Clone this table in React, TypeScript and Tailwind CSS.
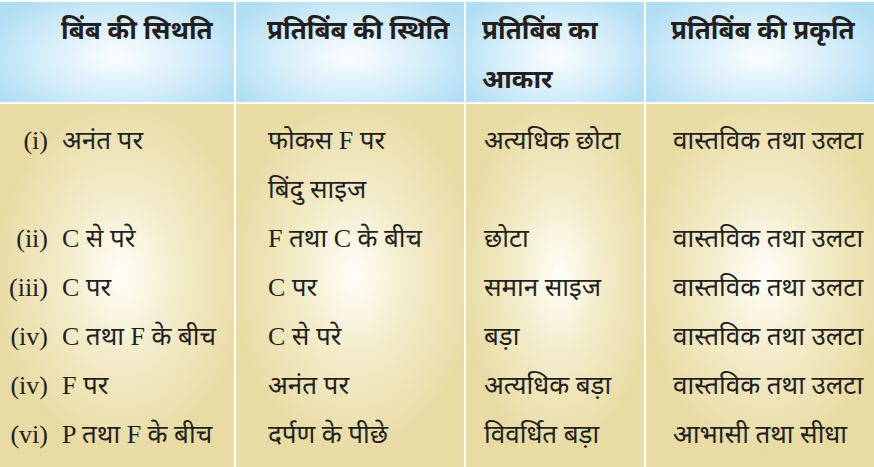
import React from "react";

const headBg =
  "bg-[radial-gradient(ellipse_60%_70%_at_50%_55%,#fbfdfe_0%,#dcf0fa_45%,#b1def4_100%)]";
const bodyBg =
  "bg-[radial-gradient(ellipse_55%_50%_at_52%_47%,#fffef8_0%,#f3ecca_45%,#e8dba3_100%)]";

const col1: [string, string][] = [
  ["(i)", "अनंत पर"],
  ["", ""],
  ["(ii)", "C से परे"],
  ["(iii)", "C पर"],
  ["(iv)", "C तथा F के बीच"],
  ["(iv)", "F पर"],
  ["(vi)", "P तथा F के बीच"],
];
const col2 = ["फोकस F पर", "बिंदु साइज", "F तथा C के बीच", "C पर", "C से परे", "अनंत पर", "दर्पण के पीछे"];
const col3 = ["अत्यधिक छोटा", "", "छोटा", "समान साइज", "बड़ा", "अत्यधिक बड़ा", "विवर्धित बड़ा"];
const col4 = [
  "वास्तविक तथा उलटा",
  "",
  "वास्तविक तथा उलटा",
  "वास्तविक तथा उलटा",
  "वास्तविक तथा उलटा",
  "वास्तविक तथा उलटा",
  "आभासी तथा सीधा",
];

const bodyFont = "font-['Liberation_Serif','Noto_Sans',serif] text-[26px] text-[#231f20]";
const headFont = "font-['Noto_Sans','DejaVu_Sans',sans-serif] font-bold text-[26px] text-[#231f20]";

export default function App() {
  return (
    <div className="w-[874px] h-[467px] bg-white pt-[2px] overflow-hidden">
      <div className="grid grid-cols-[234px_228px_178px_228px] grid-rows-[100px_363px] gap-[2px]">
        <div className={`${headBg} ${headFont} pl-[61px] pt-[3px] leading-[49px]`}>बिंब की सिथति</div>
        <div className={`${headBg} ${headFont} pl-[31px] pt-[3px] leading-[49px]`}>प्रतिबिंब की स्थिति</div>
        <div className={`${headBg} ${headFont} pl-[16px] pt-[3px] leading-[49px]`}>
          <div>प्रतिबिंब का</div>
          <div>आकार</div>
        </div>
        <div className={`${headBg} ${headFont} pl-[25px] pt-[3px] leading-[49px]`}>प्रतिबिंब की प्रकृति</div>

        <div className={`${bodyBg} ${bodyFont} pt-[12px] flex flex-col`}>
          {col1.map(([n, t], i) => (
            <div key={i} className="h-[49px] leading-[49px] flex">
              <span className="w-[48px] text-right">{n}</span>
              <span className="ml-[14px] whitespace-nowrap">{t}</span>
            </div>
          ))}
        </div>
        <div className={`${bodyBg} ${bodyFont} pt-[12px] pl-[32px] flex flex-col`}>
          {col2.map((t, i) => (
            <div key={i} className="h-[49px] leading-[49px] whitespace-nowrap">{t}</div>
          ))}
        </div>
        <div className={`${bodyBg} ${bodyFont} pt-[12px] pl-[18px] flex flex-col`}>
          {col3.map((t, i) => (
            <div key={i} className="h-[49px] leading-[49px] whitespace-nowrap">{t}</div>
          ))}
        </div>
        <div className={`${bodyBg} ${bodyFont} pt-[12px] pl-[27px] flex flex-col`}>
          {col4.map((t, i) => (
            <div key={i} className="h-[49px] leading-[49px] whitespace-nowrap">{t}</div>
          ))}
        </div>
      </div>
    </div>
  );
}
